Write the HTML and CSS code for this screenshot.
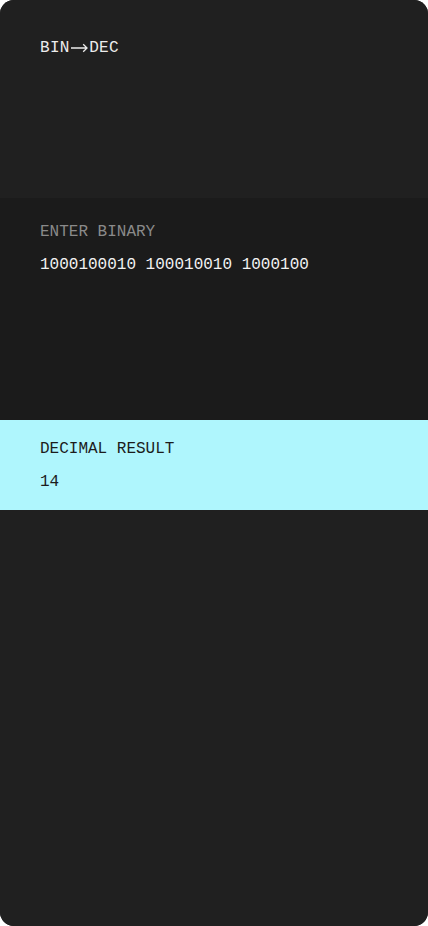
FILE: index.html
```html
<!DOCTYPE html>
<html lang="en">
<head>
<meta charset="utf-8">
<title>BIN→DEC</title>
<link rel="stylesheet" href="styles.css">
</head>
<body>
<main class="app">
  <header class="header">
    <h1 class="title">BIN<svg class="arrow" width="17" height="10" viewBox="0 0 17 10" aria-label="to"><path d="M0 5H16M12.2 1.3L16 5L12.2 8.7" fill="none" stroke="currentColor" stroke-width="1.3"/></svg>DEC</h1>
  </header>
  <section class="input-section">
    <label class="label label-muted" for="bin">ENTER BINARY</label>
    <div class="value" id="bin">1000100010 100010010 1000100</div>
  </section>
  <section class="result-section">
    <div class="label label-dark">DECIMAL RESULT</div>
    <div class="value value-dark">14</div>
  </section>
  <div class="filler"></div>
</main>
</body>
</html>
```
FILE: styles.css
```css
html, body {
  margin: 0;
  padding: 0;
  background: #ffffff;
}
body {
  width: 428px;
  height: 926px;
  font-family: "Liberation Mono", "DejaVu Sans Mono", monospace;
  font-size: 16px;
}
.app {
  width: 428px;
  height: 926px;
  border-radius: 14px;
  overflow: hidden;
  background: #202020;
  display: flex;
  flex-direction: column;
}
.header {
  height: 198px;
  flex: none;
  box-sizing: border-box;
  padding: 38px 40px 0;
  background: #202020;
}
.title {
  margin: 0;
  font-size: 16px;
  font-weight: normal;
  line-height: 20px;
  letter-spacing: 0.3px;
  color: #ececec;
  display: flex;
  align-items: center;
}
.arrow {
  display: block;
  margin: -1px 1.5px 0 1px;
}
.input-section {
  height: 222px;
  flex: none;
  box-sizing: border-box;
  padding: 24px 40px 0;
  background: #1b1b1b;
  display: flex;
  flex-direction: column;
  gap: 13px;
}
.label {
  display: block;
  line-height: 20px;
  font-size: 16px;
}
.label-muted {
  color: #8a8a8a;
}
.value {
  line-height: 20px;
  color: #f2f2f2;
}
.result-section {
  height: 90px;
  flex: none;
  box-sizing: border-box;
  padding: 19px 40px 0;
  background: #aff6fd;
  display: flex;
  flex-direction: column;
  gap: 13px;
}
.label-dark {
  color: #1c1c1c;
}
.value-dark {
  color: #1c1c1c;
}
.filler {
  flex: 1;
  background: #202020;
}
```
